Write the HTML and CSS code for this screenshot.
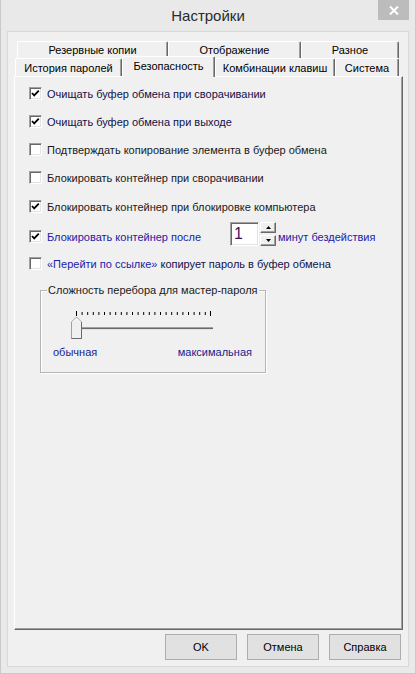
FILE: index.html
```html
<!DOCTYPE html>
<html lang="ru">
<head>
<meta charset="utf-8">
<title>Настройки</title>
<link rel="stylesheet" href="styles.css">
</head>
<body>
<div class="window">
  <div class="titlebar">
    <span class="title">Настройки</span>
    <span class="close"><svg width="10" height="9" viewBox="0 0 10 9"><path d="M1 0.5 L9 8.5 M9 0.5 L1 8.5" stroke="#fff" stroke-width="2"/></svg></span>
  </div>
  <div class="client">
    <div class="tabs">
      <div class="tabrow back">
        <div class="tab t-backup">Резервные копии</div>
        <div class="tab t-view">Отображение</div>
        <div class="tab t-misc">Разное</div>
      </div>
      <div class="tabrow front">
        <div class="tab t-hist">История паролей</div>
        <div class="tab t-sec active">Безопасность</div>
        <div class="tab t-keys">Комбинации клавиш</div>
        <div class="tab t-sys">Система</div>
      </div>
    </div>
    <div class="panel">
      <div class="opt">
        <span class="cb"><svg width="11" height="11" viewBox="0 0 11 11"><polyline points="2,5 4.2,7.4 8.8,2.6" fill="none" stroke="#000" stroke-width="1.8"/></svg></span>
        <span class="lbl navy">Очищать буфер обмена при сворачивании</span>
      </div>
      <div class="opt">
        <span class="cb"><svg width="11" height="11" viewBox="0 0 11 11"><polyline points="2,5 4.2,7.4 8.8,2.6" fill="none" stroke="#000" stroke-width="1.8"/></svg></span>
        <span class="lbl navy">Очищать буфер обмена при выходе</span>
      </div>
      <div class="opt">
        <span class="cb"></span>
        <span class="lbl">Подтверждать копирование элемента в буфер обмена</span>
      </div>
      <div class="opt">
        <span class="cb"></span>
        <span class="lbl">Блокировать контейнер при сворачивании</span>
      </div>
      <div class="opt lock-pc">
        <span class="cb"><svg width="11" height="11" viewBox="0 0 11 11"><polyline points="2,5 4.2,7.4 8.8,2.6" fill="none" stroke="#000" stroke-width="1.8"/></svg></span>
        <span class="lbl">Блокировать контейнер при блокировке компьютера</span>
      </div>
      <div class="opt lock-after">
        <span class="cb"><svg width="11" height="11" viewBox="0 0 11 11"><polyline points="2,5 4.2,7.4 8.8,2.6" fill="none" stroke="#000" stroke-width="1.8"/></svg></span>
        <span class="lbl blue after-label">Блокировать контейнер после</span>
        <span class="spin">
          <span class="spin-input">1</span>
          <span class="spin-btns">
            <span class="spin-btn"><svg width="5" height="3" viewBox="0 0 5 3"><path d="M2.5 0 L5 3 L0 3Z" fill="#000"/></svg></span>
            <span class="spin-btn"><svg width="5" height="3" viewBox="0 0 5 3"><path d="M0 0 L5 0 L2.5 3Z" fill="#000"/></svg></span>
          </span>
        </span>
        <span class="lbl blue minutes">минут бездействия</span>
      </div>
      <div class="opt link">
        <span class="cb"></span>
        <span class="lbl navy"><span class="blue">«Перейти по ссылке»</span> копирует пароль в буфер обмена</span>
      </div>
      <div class="group">
        <div class="legend">Сложность перебора для мастер-пароля</div>
        <svg class="slider" width="150" height="32" viewBox="0 0 150 32">
          <g stroke="#000" stroke-width="1">
            <line x1="8.5" y1="3" x2="8.5" y2="8"/>
            <line x1="14.1" y1="4" x2="14.1" y2="7"/>
            <line x1="19.7" y1="4" x2="19.7" y2="7"/>
            <line x1="25.3" y1="4" x2="25.3" y2="7"/>
            <line x1="30.9" y1="4" x2="30.9" y2="7"/>
            <line x1="36.5" y1="4" x2="36.5" y2="7"/>
            <line x1="42.1" y1="4" x2="42.1" y2="7"/>
            <line x1="47.7" y1="4" x2="47.7" y2="7"/>
            <line x1="53.3" y1="4" x2="53.3" y2="7"/>
            <line x1="58.9" y1="4" x2="58.9" y2="7"/>
            <line x1="64.5" y1="4" x2="64.5" y2="7"/>
            <line x1="70.1" y1="4" x2="70.1" y2="7"/>
            <line x1="75.7" y1="4" x2="75.7" y2="7"/>
            <line x1="81.3" y1="4" x2="81.3" y2="7"/>
            <line x1="86.9" y1="4" x2="86.9" y2="7"/>
            <line x1="92.5" y1="4" x2="92.5" y2="7"/>
            <line x1="98.1" y1="4" x2="98.1" y2="7"/>
            <line x1="103.7" y1="4" x2="103.7" y2="7"/>
            <line x1="109.3" y1="4" x2="109.3" y2="7"/>
            <line x1="114.9" y1="4" x2="114.9" y2="7"/>
            <line x1="120.5" y1="4" x2="120.5" y2="7"/>
            <line x1="126.1" y1="4" x2="126.1" y2="7"/>
            <line x1="131.7" y1="4" x2="131.7" y2="7"/>
            <line x1="137.3" y1="4" x2="137.3" y2="7"/>
            <line x1="142.5" y1="3" x2="142.5" y2="8"/>
          </g>
          <rect x="8" y="19" width="137" height="1" fill="#a0a0a0"/>
          <rect x="8" y="20" width="137" height="1" fill="#696969"/>
          <rect x="8" y="21" width="137" height="1" fill="#e3e3e3"/>
          <path d="M3.5 14 L8.5 9 L13.5 14 L13.5 30.5 L3.5 30.5 Z" fill="#f0f0f0" stroke="#a0a0a0" stroke-width="1"/>
          <path d="M13.5 14 L13.5 30.5 L3.5 30.5" fill="none" stroke="#696969" stroke-width="1"/>
          <path d="M4.5 14.4 L8.5 10.4 L12.5 14.4" fill="none" stroke="#fff" stroke-width="1"/>
        </svg>
        <div class="range-labels"><span>обычная</span><span>максимальная</span></div>
      </div>
    </div>
    <div class="buttons">
      <span class="btn">OK</span>
      <span class="btn">Отмена</span>
      <span class="btn">Справка</span>
    </div>
  </div>
</div>
</body>
</html>
```

FILE: styles.css
```css
html, body {
  margin: 0;
  padding: 0;
  background: #e9e9e9;
}
body {
  font-family: "Liberation Sans", Arial, sans-serif;
  font-size: 11px;
  color: #000;
}
.window {
  width: 416px;
  height: 674px;
  box-sizing: border-box;
  border: 1px solid #c9c9c9;
  border-top: none;
  background: #e9e9e9;
  display: flex;
  flex-direction: column;
}
.titlebar {
  height: 31px;
  display: grid;
  grid-template-columns: 1fr auto 1fr;
  align-items: start;
}
.title {
  grid-column: 2;
  font-size: 15px;
  line-height: 31px;
  color: #2b2b2b;
}
.close {
  grid-column: 3;
  justify-self: end;
  width: 31px;
  height: 20px;
  margin-right: 6px;
  background: #bcbcbc;
  display: flex;
  align-items: center;
  justify-content: center;
}
.close svg { display: block; }
.client {
  margin: 0 6px 6px;
  flex: 1;
  border: 1px solid #d8d8d8;
  background: #f0f0f0;
  display: flex;
  flex-direction: column;
}
.tabs {
  padding: 9px 0 0 6px;
}
.tabrow {
  display: flex;
  align-items: flex-start;
}
.tabrow.back {
  margin-left: 3px;
  height: 17px;
}
.tabrow.front {
  margin-left: 1px;
  height: 18px;
}
.tab {
  box-sizing: border-box;
  border: 1px solid;
  border-color: #fff #696969 transparent #fff;
  border-bottom: none;
  border-radius: 2px 2px 0 0;
  box-shadow: inset -1px 0 #a0a0a0;
  background: #f0f0f0;
  text-align: center;
  white-space: nowrap;
  color: #000;
}
.back .tab {
  height: 17px;
  line-height: 16px;
}
.front .tab {
  height: 18px;
  padding-top: 1px;
  line-height: 17px;
}
.front .tab.active {
  position: relative;
  z-index: 1;
  height: 21px;
  margin-top: -2px;
  padding-top: 0;
  line-height: 18px;
}
.t-backup { width: 151px; }
.t-view { width: 133px; }
.t-misc { width: 98px; }
.t-hist { width: 107px; }
.t-sec { width: 93px; }
.t-keys { width: 120px; }
.t-sys { width: 64px; }
.panel {
  margin-left: 6px;
  width: 389px;
  height: 554px;
  box-sizing: border-box;
  border: 1px solid;
  border-color: #fff #696969 #696969 #fff;
  box-shadow: inset -1px -1px #a0a0a0;
  padding: 10px 0 0 14px;
}
.opt {
  display: flex;
  align-items: center;
  height: 13px;
  margin-top: 15px;
}
.opt:first-child { margin-top: 0; }
.opt.lock-pc { margin-top: 16px; }
.opt.lock-after { margin-top: 17px; }
.opt.link { margin-top: 14px; }
.cb {
  flex: none;
  width: 13px;
  height: 13px;
  box-sizing: border-box;
  border: 1px solid;
  border-color: #a0a0a0 #fff #fff #a0a0a0;
  box-shadow: inset 1px 1px #696969, inset -1px -1px #e3e3e3;
  background: #fff;
  margin-right: 5px;
}
.cb svg { display: block; }
.lbl {
  line-height: 13px;
  margin-top: 2px;
  white-space: nowrap;
  color: #1a1a1a;
}
.navy { color: #10104a; }
.blue { color: #2020a8; }
.after-label {
  width: 183px;
  flex: none;
}
.spin {
  display: flex;
  margin-bottom: 5px;
  flex: none;
}
.spin-input {
  width: 29px;
  height: 24px;
  box-sizing: border-box;
  border: 1px solid;
  border-color: #a0a0a0 #fff #fff #a0a0a0;
  box-shadow: inset 1px 1px #696969, inset -1px -1px #e3e3e3;
  background: #fff;
  padding-left: 3px;
  font-size: 16px;
  line-height: 22px;
  color: #45105a;
}
.spin-btns {
  display: flex;
  flex-direction: column;
  gap: 2px;
  margin-left: 1px;
}
.spin-btn {
  width: 16px;
  height: 11px;
  box-sizing: border-box;
  border: 1px solid;
  border-color: #fff #696969 #696969 #fff;
  box-shadow: inset -1px -1px #a0a0a0;
  background: #f0f0f0;
  display: flex;
  align-items: center;
  justify-content: center;
}
.spin-btn svg { display: block; }
.minutes {
  margin-left: 2px;
}
.group {
  margin: 20px 0 0 11px;
  width: 226px;
  height: 83px;
  box-sizing: border-box;
  border: 1px solid #b5b5b5;
  box-shadow: inset 1px 1px #fff, 1px 1px #fff;
}
.legend {
  width: max-content;
  margin: -8px 0 0 6px;
  padding: 0 1px;
  background: #f0f0f0;
  line-height: 14px;
  color: #1a1a1a;
}
.slider {
  display: block;
  margin: 11px 0 0 27px;
}
.range-labels {
  display: flex;
  justify-content: space-between;
  margin: 5px 13px 0 12px;
  line-height: 14px;
  color: #20208f;
}
.buttons {
  display: flex;
  justify-content: flex-end;
  gap: 10px;
  margin: 4px 7px 0 0;
}
.btn {
  width: 72px;
  height: 26px;
  box-sizing: border-box;
  border: 1px solid #adadad;
  background: #e1e1e1;
  text-align: center;
  line-height: 24px;
  color: #000;
}
```
